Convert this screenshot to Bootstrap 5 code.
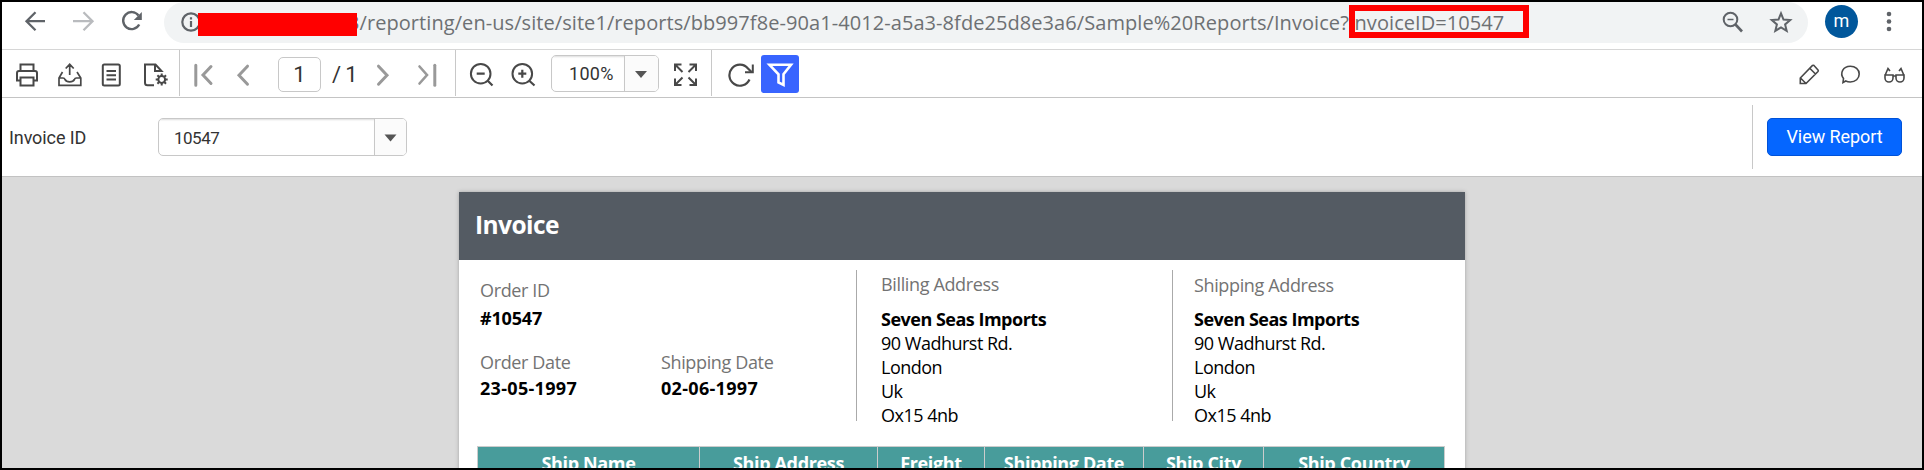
<!DOCTYPE html>
<html lang="en">
<head>
<meta charset="utf-8">
<title>Invoice</title>
<link href="https://cdn.jsdelivr.net/npm/bootstrap@5.3.0/dist/css/bootstrap.min.css" rel="stylesheet">
<style>
body{margin:0;font-family:"Open Sans",sans-serif;background:#000}
svg{display:block;fill:none;stroke:#484848;stroke-width:2}
.frame{width:1924px;height:470px;border:2px solid #000;background:#dadada}
.chrome{height:47px;display:grid;grid-template-columns:48px 48px 44px 1661px 52px 1fr;padding-left:22px;background:#fff}
.chrome svg{stroke:#5f6368}
.pill{width:1644px;height:41px;border-radius:20.5px;background:#f1f3f4}
.redact{width:159px;height:23px;margin:11px 0 0 -3px;background:#f00;position:relative;z-index:1}
.url{font-size:20px;line-height:30px;color:#6d7073;white-space:nowrap;margin:6px 0 0 -9px;letter-spacing:.07px}
.hl{position:absolute;left:0;top:-4px;width:180px;height:33px;border:6px solid #f00}
.avatar{width:33px;height:33px;background:#01579b;color:#fff;font:18px/31px Roboto,sans-serif;margin-top:3px}
.tools{height:49px;border-top:1px solid #d6d6d6;border-bottom:1px solid #c4c4c4;background:#fff;display:grid;padding-left:13px;align-items:start;
grid-template-columns:42px 42px 44px 36px 14px 42px 43px 54px 43px 41px 39px 14px 42px 40px 122px 38px 17px 33px 1036px 42px 44px 39px;font-family:Roboto,sans-serif}
.tools>svg{margin-top:12px}
.rule{width:1px;height:46px;background:#c8c8c8}
.nav-ic{stroke:#999;stroke-width:3;stroke-linecap:round}
.pagebox{width:43px;height:35px;margin-top:7px;border:1px solid #c8c8c8;border-radius:5px;font-size:22px;line-height:34px;color:#333}
.pages{font-size:22px;line-height:35px;margin-top:7px;color:#333;white-space:nowrap;letter-spacing:-.6px}
.combo{border:1px solid #c8c8c8;border-radius:5px;color:#333;background:#fff;overflow:hidden;font-family:Roboto,sans-serif}
.combo .val{box-shadow:inset 0 2px 2px -1px #ddd}
.combo .drop{border-left:1px solid #c8c8c8;background:#fbfbfb}
.zoom-level{width:108px;height:37px;margin-top:5px}
.zoom-level .val{width:73px;padding-left:17px;font-size:18px;line-height:36px;letter-spacing:.3px}
.invoice-id{width:249px;height:38px;margin-top:20px}
.invoice-id .val{width:216px;padding-left:15px;font-size:17px;line-height:38px;letter-spacing:-.5px}
.filt{width:38px;height:38px;margin-top:5px;border-radius:3px;background:#3864ff}
.filt svg{stroke:#fff;stroke-width:2.6}
.params{height:79px;background:#fff;border-bottom:1px solid #c2c2c2;font-family:Roboto,sans-serif;color:#333;display:grid;grid-template-columns:149px 1595px 14px 1fr;padding-left:7px}
.params label{font-size:18px;line-height:79px;letter-spacing:-.1px}
.split{width:1px;height:64px;margin:7px 0 0 -1px;background:#c8c8c8}
.view{width:135px;height:38px;margin-top:20px;background:#0566ff;border:1px solid #0052d8;border-radius:5px;color:#fff;font-size:18px;line-height:34px;padding:0;letter-spacing:-.07px}
.stage{height:291px;padding-top:15px;overflow:hidden}
.sheet{width:1006px;height:300px;margin-left:457px;background:#fff;box-shadow:0 0 4px rgba(0,0,0,.25)}
.head{height:68px;background:#545b63;color:#fff;font-weight:700;font-size:24.5px;line-height:66px;padding-left:16px;letter-spacing:-.55px}
.info{display:grid;grid-template-columns:181px 195px 26px 290px 22px 1fr;padding-left:21px;height:186px;font-size:18px;line-height:24px;color:#000;white-space:nowrap;letter-spacing:-.5px}
.info b,.ship th{font-weight:700}
.info .date{letter-spacing:.31px;margin-top:2px}
.lbl{color:#737373;letter-spacing:-.36px}
.vline{width:1px;height:151px;margin-top:10px;background:#aaa}
.ship{width:967px;margin-left:18px;table-layout:fixed;border-collapse:collapse;color:#fff;font-size:18px;line-height:24px;letter-spacing:-.35px}
.ship th{background:#489c9b;border:1px solid #ccc;padding:4px 0 8px;text-align:center}
</style>
<script src="https://cdn.jsdelivr.net/npm/bootstrap@5.3.0/dist/js/bootstrap.bundle.min.js"></script>
</head>
<body>
<div class="frame overflow-hidden">
  <div class="chrome">
    <svg width="24" height="24" viewBox="0 0 24 24" style="margin-top:7px"><path d="M21 12.2H3M11.5 3.2l-9 9 9 9" stroke-width="2.3"/></svg>
    <svg width="24" height="24" viewBox="0 0 24 24" style="margin-top:7px;stroke:#b9bbbe"><path d="M1 12.2h19M11.500 3.2l9 9-9 9" stroke-width="2.3"/></svg>
    <svg width="24" height="24" viewBox="0 0 24 24" style="margin-top:7px"><path d="M18.500 6.500A8.500 8.500 0 1 0 19.200 15.500" stroke-width="2.4"/><path d="M21.800 3v8h-8z" fill="#5f6368" stroke="none"/></svg>
    <div class="pill d-flex">
      <svg class="flex-shrink-0" width="20" height="20" viewBox="0 0 20 20" style="margin:10px 0 0 17px"><circle cx="10" cy="10" r="8.700" stroke-width="2.2"/><path d="M10 9v6M10 5.200v2.300" stroke-width="2.2"/></svg>
      <div class="redact flex-shrink-0"></div>
      <div class="url">3/reporting/en-us/site/site1/reports/bb997f8e-90a1-4012-a5a3-8fde25d8e3a6/Sample%20Reports/Invoice?<span class="position-relative">InvoiceID=10547<span class="hl"></span></span></div>
      <svg class="ms-auto flex-shrink-0" width="24" height="24" viewBox="0 0 24 24" style="margin:8px 24px 0 0"><circle cx="9.500" cy="9.500" r="6.800"/><path d="M14.500 14.500l6.500 7" stroke-width="2.600"/><path d="M6.500 9.500h6" stroke-width="1.500"/></svg>
      <svg class="flex-shrink-0" width="24" height="24" viewBox="0 0 24 24" style="margin:8px 15px 0 0"><path d="M12 3.300l2.500 6.200 6.700.5-5.100 4.400 1.600 6.500L12 17.400l-5.700 3.500 1.600-6.500L2.800 10l6.700-.5z"/></svg>
    </div>
    <div class="avatar rounded-circle text-center">m</div>
    <svg width="24" height="36" viewBox="0 0 24 36"><g fill="#5f6368" stroke="none"><circle cx="12" cy="12" r="2.300"/><circle cx="12" cy="19.500" r="2.300"/><circle cx="12" cy="27" r="2.300"/></g></svg>
  </div>

  <div class="tools">
    <svg width="24" height="25" viewBox="0 0 24 25"><path d="M5.500 9V2.500h13V9M5.500 18.500H2V11q0-2 2-2h16q2 0 2 2v7.500h-3.500M5.500 15.500h13v8h-13z"/></svg>
    <svg width="25" height="25" viewBox="0 0 25 25"><path d="M12.700 13V2.500M8.700 6.500l4-4.200 4 4.200M5.500 10L2 16v7.300h21.800V16L20 10M2 16h4q1.500 0 2 1.500 1.200 2.300 4.700 2.300t4.700-2.300q.5-1.500 2-1.500h4.400" style="stroke-width:1.700"/></svg>
    <svg width="24" height="25" viewBox="0 0 24 25"><rect x="3.800" y="2.500" width="17" height="21" rx="1.500"/><path d="M7.500 9h9.500M7.500 13.300h9.500M7.500 17.500h9.500"/></svg>
    <svg width="27" height="25" viewBox="0 0 27 25"><path d="M11 23.300H4.500q-2.500 0-2.500-2.500V2.500h10.500l6 6.500H12V3"/><circle cx="18.700" cy="17.500" r="3.400"/><path d="M18.700 11.500v3M18.700 20.500v3M12.700 17.500h3M21.700 17.500h3M14.400 13.200l2 2M21 19.800l2 2M23 13.200l-2 2M16.400 19.800l-2 2"/></svg>
    <div class="rule"></div>
    <svg class="nav-ic" width="24" height="25" viewBox="0 0 24 25"><path d="M2.800 3.200v20M18 4.500l-8 8.500 8 8.500"/></svg>
    <svg class="nav-ic" width="24" height="25" viewBox="0 0 24 25"><path d="M12.500 4.200L4 13.200l8.500 9"/></svg>
    <div class="pagebox text-center">1</div>
    <div class="pages">/ 1</div>
    <svg class="nav-ic" width="24" height="25" viewBox="0 0 24 25"><path d="M3.500 4.200l8.500 9-8.500 9"/></svg>
    <svg class="nav-ic" width="24" height="25" viewBox="0 0 24 25"><path d="M3.500 4.500l7.500 8.500-7.500 8.500" style="stroke-width:2.600"/><path d="M18.800 3.200v20"/></svg>
    <div class="rule"></div>
    <svg width="25" height="25" viewBox="0 0 25 25"><circle cx="11.700" cy="11.700" r="9.800"/><path d="M7.700 11.700h8M18.500 18.500l5 5" style="stroke-width:2.200"/></svg>
    <svg width="25" height="25" viewBox="0 0 25 25"><circle cx="11.300" cy="11.700" r="9.800"/><path d="M7.300 11.700h8M11.300 7.700v8M18 18.500l5.500 5" style="stroke-width:2.200"/></svg>
    <div class="combo zoom-level d-flex">
      <div class="val">100%</div>
      <div class="drop flex-fill"><svg width="33" height="35" viewBox="0 0 33 35"><path d="M10 15h12l-6 7z" fill="#555" stroke="none"/></svg></div>
    </div>
    <svg width="25" height="25" viewBox="0 0 25 25"><path d="M2 9V2.500h6.500M2.500 3l7 7M16.500 2.500H23V9M22.500 3l-7 7M2 16.500V23h6.500M2.500 22.500l7-7M23 16.500V23h-6.500M22.500 22.500l-7-7"/></svg>
    <div class="rule"></div>
    <svg width="27" height="25" viewBox="0 0 27 25"><path d="M21.500 17.500A10.500 10.500 0 1 1 20 6.500l3.500 3.500" style="stroke-width:2.200"/><path d="M24.800 2.500v7.700H17"/></svg>
    <div class="filt"><svg width="38" height="38" viewBox="0 0 38 38"><path d="M8.500 9.800h21.500l-7.500 9.500V30l-5-2.500v-8.200z"/></svg></div>
    <svg width="24" height="25" viewBox="0 0 24 25"><path d="M3.300 21.500V16L15.500 3.500q.8-.5 1.500 0L21 8q.6.800 0 1.500L9 21.500zM13 6.500l5.500 5.500M3.500 16l5.500 5.500" style="stroke-width:1.600"/></svg>
    <svg width="24" height="25" viewBox="0 0 24 25"><path d="M4.500 16.500C.5 11 4 4.200 11.300 4.200c5 0 8.900 3.200 8.900 7.800s-3.800 8-8.900 8q-2.600 0-4.500-1l-2.800 1.500z" style="stroke-width:1.600"/></svg>
    <svg width="24" height="25" viewBox="0 0 24 25"><path d="M2 13h8v3a4 4 0 0 1-8 0zM13 13h8v3a4 4 0 0 1-8 0zM10 14h3M2 13.500l3-7 2 2.500M21 13.500l-3-7-2 2.500" style="stroke-width:1.600"/></svg>
  </div>

  <div class="params">
    <label>Invoice ID</label>
    <div class="combo invoice-id d-flex">
      <div class="val">10547</div>
      <div class="drop flex-fill"><svg width="31" height="36" viewBox="0 0 31 36"><path d="M9.500 15.500h12l-6 7z" fill="#555" stroke="none"/></svg></div>
    </div>
    <div class="split"></div>
    <button class="view btn" type="button">View Report</button>
  </div>

  <div class="stage">
    <div class="sheet">
      <div class="head">Invoice</div>
      <div class="info">
        <div>
          <div class="lbl" style="margin-top:18px">Order ID</div>
          <b class="d-block mt-1" style="letter-spacing:-.18px">#10547</b>
          <div class="lbl" style="margin-top:20px">Order Date</div>
          <b class="d-block date">23-05-1997</b>
        </div>
        <div>
          <div class="lbl" style="margin-top:90px">Shipping Date</div>
          <b class="d-block date">02-06-1997</b>
        </div>
        <div class="vline"></div>
        <div style="margin-left:-1px">
          <div class="lbl" style="margin-top:12px">Billing Address</div>
          <b class="d-block" style="margin-top:11px">Seven Seas Imports</b>
          <div>90 Wadhurst Rd.</div><div>London</div><div>Uk</div><div>Ox15 4nb</div>
        </div>
        <div class="vline"></div>
        <div>
          <div class="lbl" style="margin-top:13px">Shipping Address</div>
          <b class="d-block" style="margin-top:10px">Seven Seas Imports</b>
          <div>90 Wadhurst Rd.</div><div>London</div><div>Uk</div><div>Ox15 4nb</div>
        </div>
      </div>
      <table class="ship">
        <colgroup><col style="width:222px"><col style="width:178px"><col style="width:107px"><col style="width:159px"><col style="width:120px"><col style="width:181px"></colgroup>
        <tr><th>Ship Name</th><th>Ship Address</th><th>Freight</th><th>Shipping Date</th><th>Ship City</th><th>Ship Country</th></tr>
      </table>
    </div>
  </div>
</div>
</body>
</html>
